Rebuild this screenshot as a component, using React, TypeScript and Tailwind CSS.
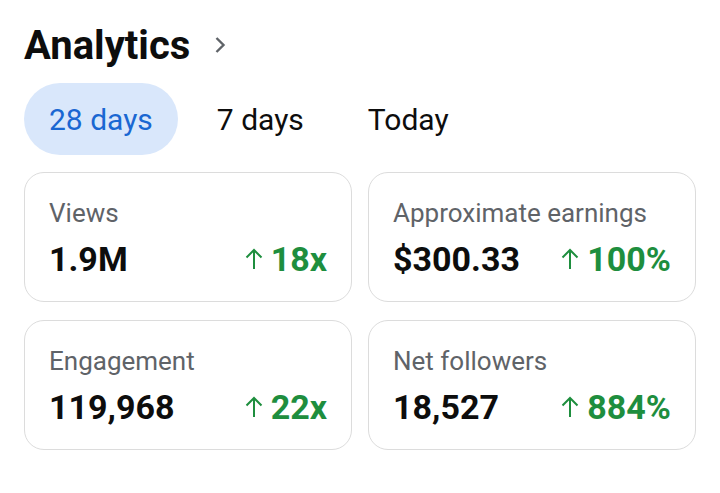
import React from "react";

const font = { fontFamily: "Roboto, 'Noto Sans', sans-serif" };

function UpArrow() {
  return (
    <svg width="18" height="22" viewBox="0 0 18 22" className="shrink-0">
      <path d="M9 2 V21" stroke="#1e8e3e" strokeWidth="2" fill="none" />
      <path d="M1.5 9.5 L9 2 L16.5 9.5" stroke="#1e8e3e" strokeWidth="2" fill="none" />
    </svg>
  );
}

function Card({ label, value, change }: { label: string; value: string; change: string }) {
  return (
    <div className="rounded-[20px] border border-[#dcdcdc] bg-white px-[24px] pt-[24px] pb-[22px]">
      <div className="text-[26px] leading-[32px] text-[#5f6368] whitespace-nowrap">{label}</div>
      <div className="mt-[10px] flex items-center justify-between">
        <span className="text-[34px] leading-[40px] font-bold text-[#0d0d0d]">{value}</span>
        <span className="flex items-center gap-[8px] text-[34px] leading-[40px] font-bold text-[#1e8e3e]">
          <UpArrow />
          {change}
        </span>
      </div>
    </div>
  );
}

export default function App() {
  return (
    <div className="w-[720px] h-[493px] bg-white px-[24px] pt-[22px]" style={font}>
      <div className="flex items-center">
        <h1 className="text-[40px] leading-[48px] font-bold text-[#0d0d0d]">Analytics</h1>
        <svg width="14" height="20" viewBox="0 0 14 20" className="ml-[23px] mt-[-2px]">
          <path d="M3.5 3 L10.5 10 L3.5 17" stroke="#5f6368" strokeWidth="2.4" fill="none" />
        </svg>
      </div>
      <div className="mt-[13px] flex items-center gap-[14px]">
        <div className="h-[72px] px-[25px] rounded-full bg-[#d9e7fb] flex items-center text-[30px] text-[#1a67d2]">28 days</div>
        <div className="h-[72px] px-[25px] flex items-center text-[30px] text-[#0d0d0d]">7 days</div>
        <div className="h-[72px] px-[25px] flex items-center text-[30px] text-[#0d0d0d]">Today</div>
      </div>
      <div className="mt-[17px] grid grid-cols-2 gap-x-[16px] gap-y-[18px]">
        <Card label="Views" value="1.9M" change="18x" />
        <Card label="Approximate earnings" value="$300.33" change="100%" />
        <Card label="Engagement" value="119,968" change="22x" />
        <Card label="Net followers" value="18,527" change="884%" />
      </div>
    </div>
  );
}
